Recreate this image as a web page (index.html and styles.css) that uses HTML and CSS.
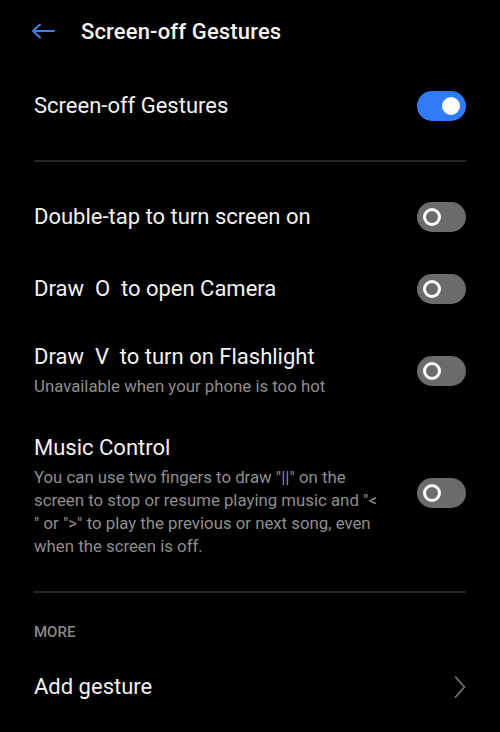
FILE: index.html
```html
<!DOCTYPE html>
<html>
<head>
<meta charset="utf-8">
<link rel="stylesheet" href="styles.css">
</head>
<body>
<header class="topbar">
  <svg class="back" width="24" height="16" viewBox="0 0 24 16"><path d="M23 8H2M9 1.5L2 8l7 6.5" fill="none" stroke="#3d82f2" stroke-width="2" stroke-linecap="round" stroke-linejoin="round"/></svg>
  <h1 class="title">Screen-off Gestures</h1>
</header>
<main class="content">
  <div class="row main-row">
    <div class="text"><div class="label">Screen-off Gestures</div></div>
    <span class="toggle on"><span class="knob"></span></span>
  </div>
  <div class="group">
    <div class="row">
      <div class="text"><div class="label">Double-tap to turn screen on</div></div>
      <span class="toggle"><span class="knob"></span></span>
    </div>
    <div class="row">
      <div class="text"><div class="label">Draw&nbsp; O&nbsp; to open Camera</div></div>
      <span class="toggle"><span class="knob"></span></span>
    </div>
    <div class="row multi">
      <div class="text">
        <div class="label">Draw&nbsp; V&nbsp; to turn on Flashlight</div>
        <div class="sub">Unavailable when your phone is too hot</div>
      </div>
      <span class="toggle"><span class="knob"></span></span>
    </div>
    <div class="row multi">
      <div class="text narrow">
        <div class="label">Music Control</div>
        <div class="sub">You can use two fingers to draw "||" on the screen to stop or resume playing music and "&lt; " or "&gt;" to play the previous or next song, even when the screen is off.</div>
      </div>
      <span class="toggle raised"><span class="knob"></span></span>
    </div>
  </div>
  <div class="section">MORE</div>
  <div class="row link-row">
    <div class="text"><div class="label">Add gesture</div></div>
    <svg class="chev" width="12" height="24" viewBox="0 0 12 24"><path d="M1.5 2L10.5 12 1.5 22" fill="none" stroke="#7a7a7a" stroke-width="1.6" stroke-linecap="round" stroke-linejoin="round"/></svg>
  </div>
</main>
</body>
</html>
```

FILE: styles.css
```css
html, body {
  margin: 0;
  padding: 0;
  background: #000;
}
body {
  font-family: Roboto, "Noto Sans", "DejaVu Sans", sans-serif;
  color: #f2f2f2;
  width: 500px;
  height: 732px;
  overflow: hidden;
}
.topbar {
  height: 62px;
  display: flex;
  align-items: center;
  padding-left: 31px;
}
.back {
  display: block;
  margin-right: 26px;
}
.title {
  margin: 0;
  font-size: 22px;
  font-weight: 500;
  color: #f5f5f5;
  letter-spacing: 0.15px;
}
.content {
  padding: 0 34px 0 34px;
}
.row {
  display: flex;
  align-items: center;
  justify-content: space-between;
  min-height: 72px;
}
.main-row {
  margin-top: 8px;
  border-bottom: 2px solid #262626;
  padding-bottom: 18px;
}
.group {
  padding-top: 19px;
  border-bottom: 2px solid #262626;
  padding-bottom: 15px;
}
.multi {
  min-height: 0;
  padding: 18px 0;
}
.text {
  flex: 1;
}
.narrow {
  max-width: 352px;
  margin-right: 20px;
}
.label {
  font-size: 22px;
  line-height: 28px;
  color: #f2f2f2;
}
.sub {
  font-size: 16.8px;
  line-height: 23px;
  color: #8e8e8e;
  margin-top: 4px;
}
.toggle {
  flex: none;
  width: 49px;
  height: 30px;
  border-radius: 15px;
  background: #6b6b6b;
  display: flex;
  align-items: center;
  padding: 0 6px;
  box-sizing: border-box;
}
.toggle.raised {
  margin-bottom: 6px;
}
.toggle .knob {
  width: 18px;
  height: 18px;
  border-radius: 50%;
  border: 3px solid #fff;
  box-sizing: border-box;
}
.toggle.on {
  background: #2f7cf6;
  justify-content: flex-end;
}
.toggle.on .knob {
  background: #fff;
}
.section {
  margin-top: 29px;
  font-size: 15px;
  line-height: 20px;
  font-weight: 500;
  color: #8a8a8a;
}
.link-row {
  margin-top: 9px;
}
.chev {
  display: block;
}
```
